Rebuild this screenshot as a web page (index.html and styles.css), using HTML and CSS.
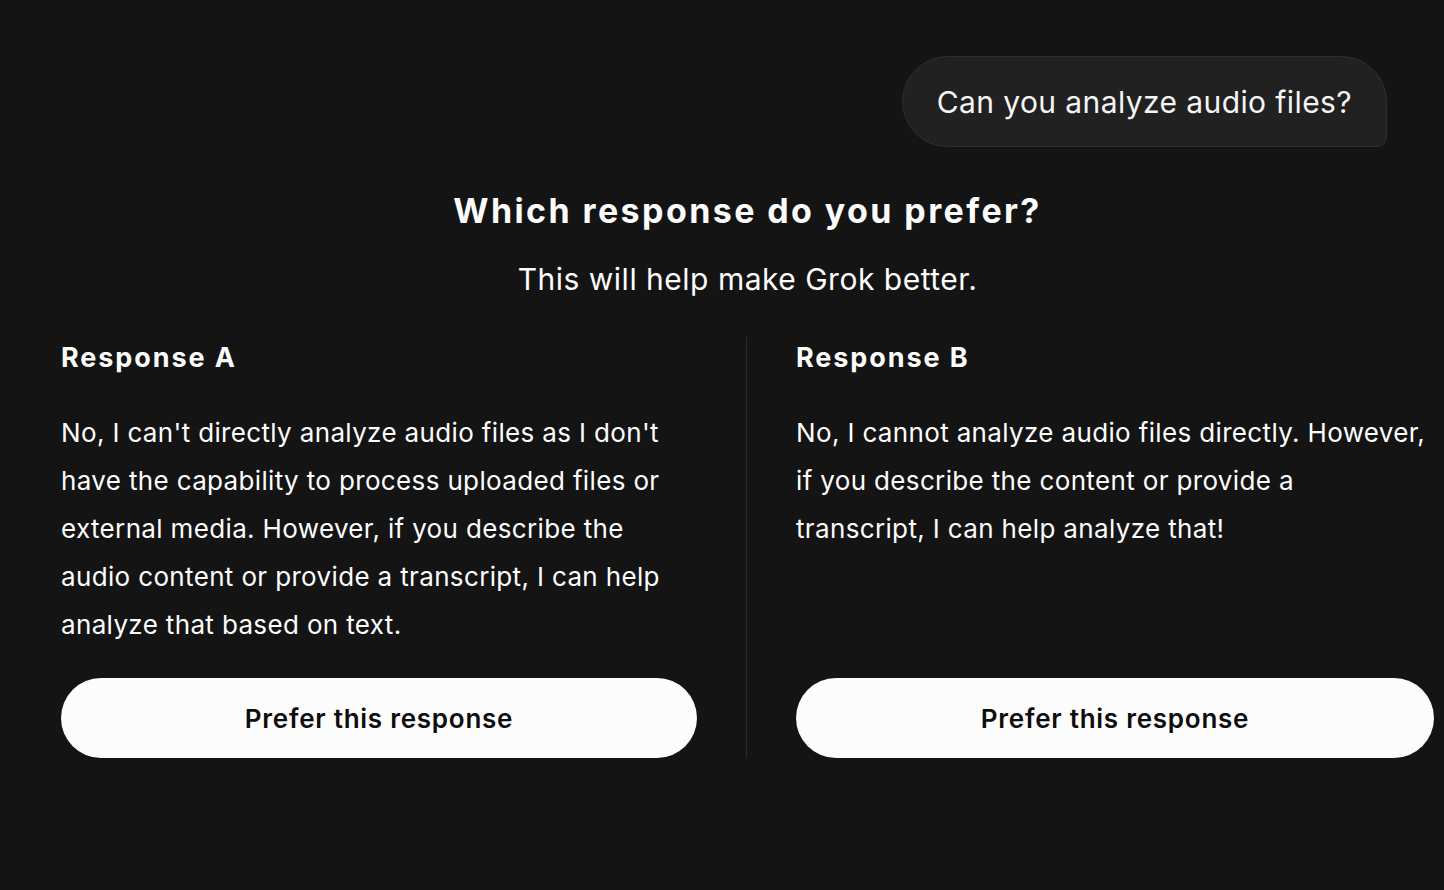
FILE: index.html
```html
<!DOCTYPE html>
<html lang="en">
<head>
<meta charset="utf-8">
<title>Which response do you prefer?</title>
<link rel="stylesheet" href="styles.css">
</head>
<body>
<main class="page">
  <div class="user-row">
    <div class="bubble">Can you analyze audio files?</div>
  </div>
  <h1 class="title">Which response do you prefer?</h1>
  <p class="subtitle">This will help make Grok better.</p>
  <section class="compare">
    <div class="col col-a">
      <h2 class="col-title">Response A</h2>
      <p class="col-body">No, I can't directly analyze audio files as I don't have the capability to process uploaded files or external media. However, if you describe the audio content or provide a transcript, I can help analyze that based on text.</p>
      <button class="prefer">Prefer this response</button>
    </div>
    <div class="divider"></div>
    <div class="col col-b">
      <h2 class="col-title">Response B</h2>
      <p class="col-body">No, I cannot analyze audio files directly. However, if you describe the content or provide a transcript, I can help analyze that!</p>
      <button class="prefer">Prefer this response</button>
    </div>
  </section>
</main>
</body>
</html>
```

FILE: styles.css
```css
* { box-sizing: border-box; }
html, body {
  margin: 0;
  padding: 0;
  background: #141414;
  color: #fcfcfc;
  font-family: Inter, "Noto Sans", sans-serif;
}
.page {
  width: 1434px;
  padding: 56px 0 0 61px;
}
.user-row {
  display: flex;
  justify-content: flex-end;
  padding-right: 47px;
}
.bubble {
  background: #212121;
  border: 1px solid #2e2e2e;
  border-radius: 46px 46px 10px 46px;
  height: 91px;
  padding: 0 34px 0 34px;
  display: flex;
  align-items: center;
  font-size: 30px;
  letter-spacing: 0.4px;
  color: #f5f5f5;
}
.title {
  margin: 42px 0 0;
  text-align: center;
  font-size: 34px;
  font-weight: 700;
  letter-spacing: 2.4px;
  line-height: 44px;
}
.subtitle {
  margin: 26px 0 0;
  text-align: center;
  font-size: 30px;
  letter-spacing: 0.5px;
  line-height: 40px;
}
.compare {
  display: flex;
  margin-top: 38px;
}
.col {
  display: flex;
  flex-direction: column;
}
.col-a { width: 636px; }
.col-b { width: 638px; }
.divider {
  width: 1px;
  background: #2b2b2b;
  margin: 0 49px;
}
.col-title {
  margin: 1px 0 0;
  font-size: 27px;
  font-weight: 700;
  letter-spacing: 1.9px;
  line-height: 40px;
}
.col-body {
  margin: 31px 0 29px;
  padding-right: 6px;
  font-size: 26px;
  letter-spacing: 0.35px;
  line-height: 48px;
}
.prefer {
  margin-top: auto;
  height: 80px;
  border: none;
  border-radius: 40px;
  background: #fcfcfc;
  color: #0d0d0d;
  font-family: inherit;
  font-size: 26px;
  font-weight: 600;
  letter-spacing: 0.75px;
}
```
